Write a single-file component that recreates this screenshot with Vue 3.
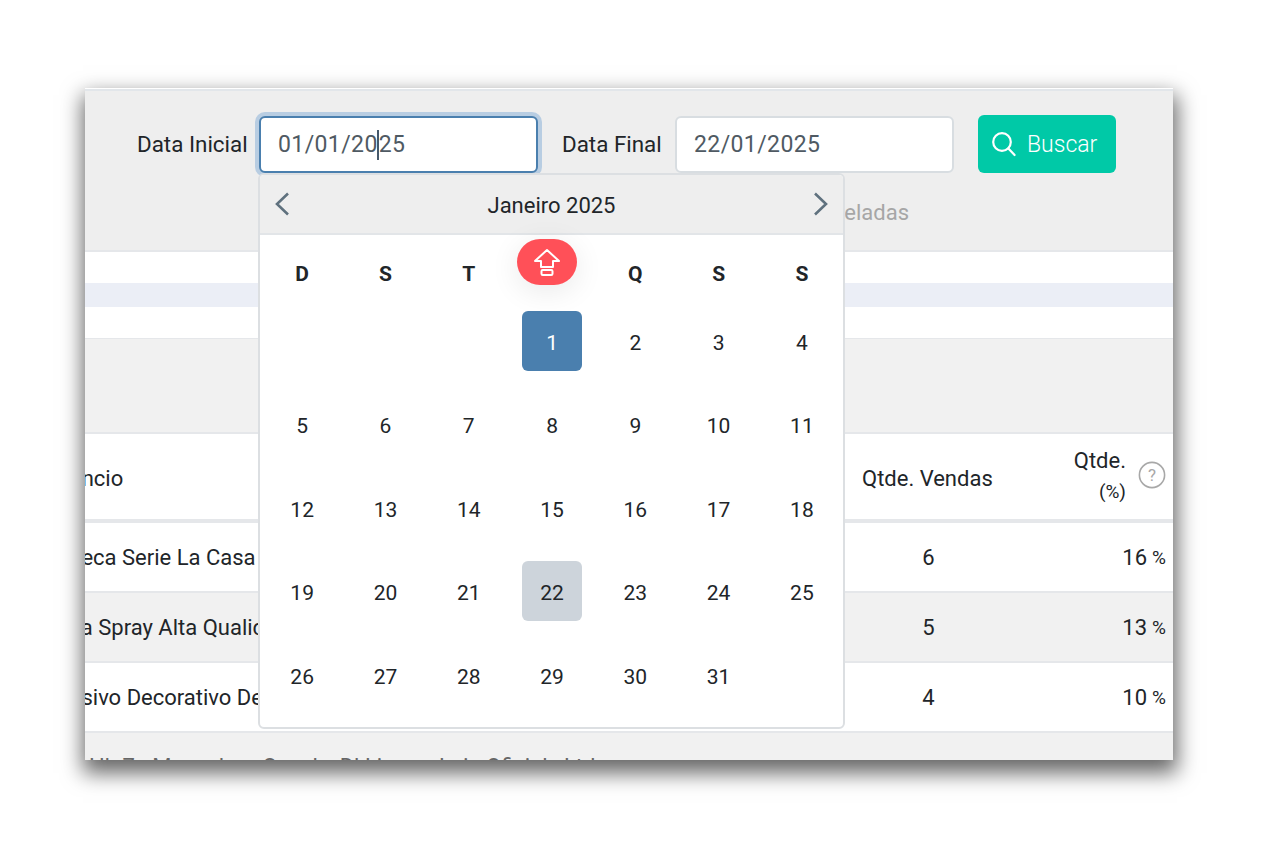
<template>
    <div class="page">
        <div class="window">
            <div class="content">
                <div class="filters">
                    <div class="filter-row">
                        <label class="label-start">Data Inicial</label>
                        <div class="date-input focused">01/01/20<span class="caret"></span>25</div>
                        <label class="label-end">Data Final</label>
                        <div class="date-input">22/01/2025</div>
                        <button class="btn-search">
                            <svg width="26" height="26" viewBox="0 0 26 26" fill="none" stroke="#fff" stroke-width="2.2" stroke-linecap="round">
                                <circle cx="11" cy="11" r="8.8" />
                                <path d="M17.4 17.4 L23.6 24" />
                            </svg>
                            Buscar
                        </button>
                    </div>
                    <div class="canceled">Incluir canceladas</div>
                </div>

                <div class="stats">
                    <div class="stripe"></div>
                </div>

                <div class="band"></div>

                <div class="row head">
                    <div class="col-name">Anúncio</div>
                    <div class="col-qty">Qtde. Vendas</div>
                    <div class="col-pct">
                        <span class="pct-title">Qtde.<br><small>(%)</small></span>
                        <svg class="help" width="28" height="28" viewBox="0 0 28 28" fill="none">
                            <circle cx="14" cy="14" r="12.6" stroke="#a8a8a8" stroke-width="1.6" />
                            <text x="14" y="20" text-anchor="middle" font-size="17" font-family="Roboto, sans-serif" fill="#a8a8a8">?</text>
                        </svg>
                    </div>
                </div>
                <div v-for="(item, i) in products" :key="item.name" class="row" :class="{ alt: i === 1 }">
                    <div class="col-name">{{ item.name }}</div>
                    <div class="col-qty center">{{ item.qty }}</div>
                    <div class="col-pct">{{ item.pct }} <small>%</small></div>
                </div>

                <div class="footer">Hb 7a Mensal &nbsp; &nbsp; &nbsp; Canal: &nbsp; Dl Livre &nbsp; &nbsp; Loja Oficial &nbsp; Ltda</div>

                <div class="calendar">
                    <div class="cal-head">
                        <svg width="16" height="24" viewBox="0 0 16 24" fill="none" stroke="#5f717e" stroke-width="2.6">
                            <path d="M14 1.5 L3 12 L14 22.5" />
                        </svg>
                        <span class="cal-title">Janeiro 2025</span>
                        <svg width="16" height="24" viewBox="0 0 16 24" fill="none" stroke="#5f717e" stroke-width="2.6">
                            <path d="M2 1.5 L13 12 L2 22.5" />
                        </svg>
                    </div>
                    <div class="weekdays">
                        <div v-for="(d, i) in weekdays" :key="i">{{ d }}</div>
                    </div>
                    <div class="days">
                        <div v-for="(d, i) in cells" :key="i" class="day">
                            <span v-if="d" :class="{ start: d === 1, end: d === 22 }">{{ d }}</span>
                        </div>
                    </div>
                </div>

                <div class="caps">
                    <svg width="30" height="30" viewBox="0 0 30 30" fill="none" stroke="#fff" stroke-width="2" stroke-linejoin="round">
                        <path d="M15 3 L27 14 H21 V20 H9 V14 H3 Z" />
                        <rect x="9.5" y="23" width="11" height="5" rx="1.2" />
                    </svg>
                </div>
            </div>
        </div>
    </div>
</template>

<script setup>
const weekdays = ['D', 'S', 'T', 'Q', 'Q', 'S', 'S'];

// janeiro 2025 comeca na quarta
const cells = [null, null, null];
for (let d = 1; d <= 31; d++) cells.push(d);

const products = [
    { name: 'Boneca Serie La Casa Xadrez Colecionavel', qty: 6, pct: 16 },
    { name: 'Tinta Spray Alta Qualidade Colorida', qty: 5, pct: 13 },
    { name: 'Adesivo Decorativo De Parede', qty: 4, pct: 10 },
];
</script>

<style>
html, body { background: #fff; }
</style>

<style scoped>
.page {
    width: 1277px;
    height: 848px;
    padding: 88px 0 0 85px;
    box-sizing: border-box;
    overflow: hidden;
    font-family: Roboto, "Open Sans", sans-serif;
    color: #212529;
}
.window {
    width: 1088px;
    height: 672px;
    box-shadow: 1px 10px 20px 3px rgba(0, 0, 0, 0.6);
}
.content {
    position: relative;
    height: 100%;
    background: #f1f1f1;
    overflow: hidden;
    border-top: 1px solid #fff;
    box-sizing: border-box;
}

.filters {
    height: 163px;
    box-sizing: border-box;
    background: #eee;
    border-top: 2px solid #e2e6ea;
    border-bottom: 2px solid #e5e7ea;
    padding: 24px 0 0 52px;
}
.filter-row { display: flex; align-items: center; height: 58px; }
.filter-row label { font-size: 22.4px; white-space: nowrap; }
.label-start { width: 122px; }
.label-end { width: 113px; }
.date-input {
    width: 279px;
    height: 57px;
    box-sizing: border-box;
    background: #fff;
    border: 2px solid #d8dde1;
    border-radius: 6px;
    margin-right: 24px;
    padding-left: 17px;
    line-height: 53px;
    font-size: 23px;
    color: #4f5a63;
    letter-spacing: 0.4px;
}
.date-input.focused {
    border-color: #4a7fae;
    box-shadow: 0 0 0 4px #b8cde2;
}
.caret {
    display: inline-block;
    width: 0;
    height: 30px;
    margin-left: -1px;
    border-left: 2px solid #45596b;
    vertical-align: middle;
}
.btn-search {
    width: 138px;
    height: 58px;
    display: flex;
    align-items: center;
    gap: 10px;
    padding: 0 0 0 13px;
    background: #00c9a7;
    border: none;
    border-radius: 6px;
    color: #fff;
    font: inherit;
    font-size: 23px;
    font-weight: 300;
}
.canceled {
    width: 772px;
    margin-top: 27px;
    text-align: right;
    font-size: 22px;
    color: #a6a6a6;
}

.stats {
    height: 87px;
    box-sizing: border-box;
    background: #fff;
    padding-top: 31px;
    border-bottom: 1px solid #e5e7ea;
}
.stripe { height: 24px; background: #ebeef6; }
.band { height: 93px; background: #f1f1f1; border-bottom: 2px solid #e5e7ea; }

.row {
    display: grid;
    grid-template-columns: 740px 140px 208px;
    align-items: center;
    height: 70px;
    box-sizing: border-box;
    background: #fff;
    border-bottom: 2px solid #e5e7ea;
    font-size: 22px;
}
.row.alt { background: #f1f1f1; }
.row.head { height: 89px; padding-top: 3px; border-bottom-width: 4px; }
.col-name { margin-left: -42px; white-space: nowrap; overflow: hidden; }
.col-qty { margin-left: 37px; white-space: nowrap; }
.col-qty.center { text-align: center; margin-left: 67px; }
.col-pct {
    display: flex;
    justify-content: flex-end;
    align-items: center;
    gap: 12px;
    padding-right: 7px;
    white-space: nowrap;
}
.row:not(.head) .col-pct { gap: 5px; }
.col-pct small { font-size: 19px; }
.pct-title { text-align: right; line-height: 30px; padding-bottom: 4px; }
.help { margin-bottom: 6px; }

.footer {
    height: 28px;
    overflow: hidden;
    padding: 23px 0 0 4px;
    box-sizing: border-box;
    font-size: 22px;
    line-height: 1;
    color: #666;
    white-space: nowrap;
}

.calendar {
    position: absolute;
    left: 173px;
    top: 84px;
    width: 587px;
    height: 556px;
    box-sizing: border-box;
    background: #fff;
    border: 2px solid #dcdfe2;
    border-radius: 6px;
    overflow: hidden;
}
.cal-head {
    height: 60px;
    box-sizing: border-box;
    display: flex;
    align-items: center;
    justify-content: space-between;
    padding: 0 14px;
    background: #eee;
    border-bottom: 2px solid #e2e5e8;
    font-size: 22px;
}
.cal-title { padding-top: 2px; }
.weekdays {
    display: grid;
    grid-template-columns: repeat(7, 83.3px);
    height: 64px;
    padding: 14px 0 0 0.5px;
    box-sizing: border-box;
    align-items: center;
    text-align: center;
    font-size: 21px;
    font-weight: 700;
}
.days {
    display: grid;
    grid-template-columns: repeat(7, 83.3px);
    grid-auto-rows: 83.5px;
    padding-left: 0.5px;
}
.day { display: flex; align-items: center; justify-content: center; font-size: 21px; }
.day span {
    width: 60px;
    height: 60px;
    box-sizing: border-box;
    padding-top: 4px;
    display: flex;
    align-items: center;
    justify-content: center;
    border-radius: 6px;
}
.day .start { background: #4a7fae; color: #fff; }
.day .end { background: #cdd4db; }

.caps {
    position: absolute;
    left: 432px;
    top: 150px;
    width: 60px;
    height: 46px;
    display: flex;
    align-items: center;
    justify-content: center;
    background: #ff5058;
    border-radius: 23px;
    box-shadow: 0 6px 30px rgba(0, 0, 0, 0.09);
}
</style>
